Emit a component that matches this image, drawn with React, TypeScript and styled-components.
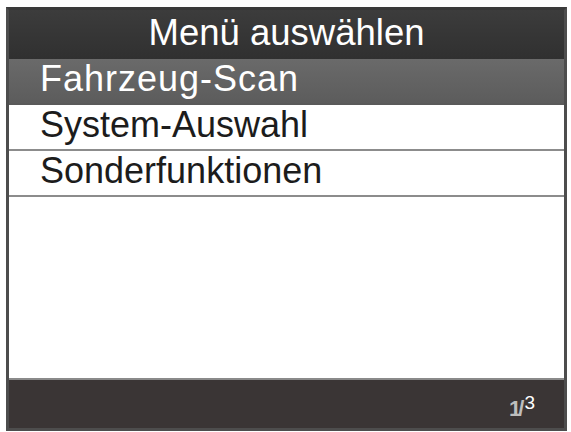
import React from 'react'
import styled, { createGlobalStyle } from 'styled-components'

const GlobalStyle = createGlobalStyle`
    html, body {
        margin: 0;
        padding: 0;
        background: #ffffff;
    }
    body {
        font-family: "Liberation Sans", Arial, sans-serif;
    }
`

const Page = styled.main`
    width: 571px;
    height: 432px;
    padding: 7px 4px 1px 6px;
    box-sizing: border-box;
`

const Screen = styled.section`
    height: 100%;
    box-sizing: border-box;
    border: 3px solid #4d4d4d;
    border-top-color: #3a3a3a;
    display: flex;
    flex-direction: column;
    background: #ffffff;
`

const Header = styled.header`
    height: 49px;
    flex: none;
    background: linear-gradient(#3c3c3c, #303030);
    color: #ffffff;
    font-size: 36.5px;
    line-height: 46px;
    text-align: center;
`

const List = styled.ul`
    flex: 1;
    margin: 0;
    padding: 0;
    list-style: none;
`

const Row = styled.li<{ $active?: boolean }>`
    height: 46px;
    box-sizing: border-box;
    padding-left: 31px;
    font-size: 36px;
    line-height: 40px;
    letter-spacing: ${p => (p.$active ? '1px' : '0')};
    border-bottom: 2px solid ${p => (p.$active ? '#5a5a5a' : '#8c8c8c')};
    background: ${p => (p.$active ? 'linear-gradient(#6a6a6a, #5c5c5c)' : '#ffffff')};
    color: ${p => (p.$active ? '#ffffff' : '#1c1c1c')};
`

const Footer = styled.footer`
    height: 50px;
    flex: none;
    box-sizing: border-box;
    border-top: 2px solid #8a8a8a;
    background: #3a3535;
    display: flex;
    justify-content: flex-end;
    align-items: center;
    padding-right: 29px;
`

const Pager = styled.span`
    color: #bdbdbd;
    font-size: 22px;
    font-weight: bold;
    letter-spacing: -3px;
    margin-top: 6px;
    > sup {
        color: #ffffff;
        font-weight: normal;
        font-size: 19px;
        letter-spacing: 0;
        margin-left: 3px;
        vertical-align: 7px;
    }
`

const items = ['Fahrzeug-Scan', 'System-Auswahl', 'Sonderfunktionen']

function App() {
    return (
        <>
            <GlobalStyle />
            <Page>
                <Screen>
                    <Header>Menü auswählen</Header>
                    <List>
                        {items.map((item, i) => (
                            <Row key={item} $active={i === 0}>{item}</Row>
                        ))}
                    </List>
                    <Footer>
                        <Pager>1/<sup>3</sup></Pager>
                    </Footer>
                </Screen>
            </Page>
        </>
    )
}

export default App
